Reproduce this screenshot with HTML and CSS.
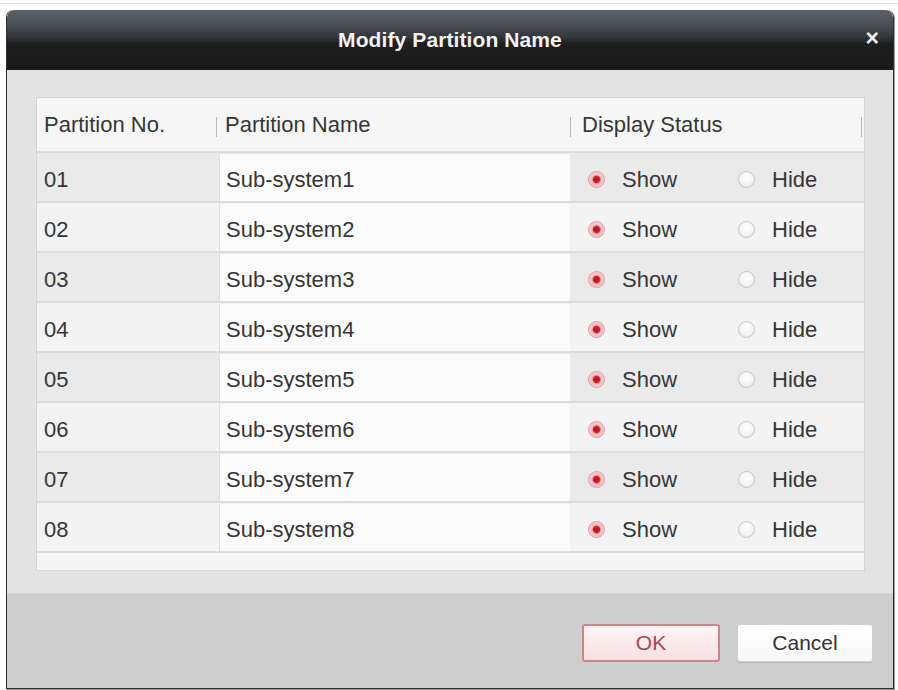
FILE: index.html
```html
<!DOCTYPE html>
<html>
<head>
<meta charset="utf-8">
<link rel="stylesheet" href="styles.css">
</head>
<body>
<div class="topline"></div>
<div class="dialog">
  <div class="titlebar">
    <span class="title">Modify Partition Name</span>
    <span class="close">×</span>
  </div>
  <div class="content">
    <div class="panel">
      <div class="thead">
        <div class="th c1">Partition No.</div>
        <div class="th c2"><span class="sep"></span>Partition Name</div>
        <div class="th c3"><span class="sep wide"></span>Display Status<span class="sep end"></span></div>
      </div>
      <div class="row odd"><div class="c1">01</div><div class="c2"><div class="inp">Sub-system1</div></div><div class="c3"><span class="radio on"></span><span class="lbl">Show</span><span class="radio"></span><span class="lbl">Hide</span></div></div>
      <div class="row"><div class="c1">02</div><div class="c2"><div class="inp">Sub-system2</div></div><div class="c3"><span class="radio on"></span><span class="lbl">Show</span><span class="radio"></span><span class="lbl">Hide</span></div></div>
      <div class="row odd"><div class="c1">03</div><div class="c2"><div class="inp">Sub-system3</div></div><div class="c3"><span class="radio on"></span><span class="lbl">Show</span><span class="radio"></span><span class="lbl">Hide</span></div></div>
      <div class="row"><div class="c1">04</div><div class="c2"><div class="inp">Sub-system4</div></div><div class="c3"><span class="radio on"></span><span class="lbl">Show</span><span class="radio"></span><span class="lbl">Hide</span></div></div>
      <div class="row odd"><div class="c1">05</div><div class="c2"><div class="inp">Sub-system5</div></div><div class="c3"><span class="radio on"></span><span class="lbl">Show</span><span class="radio"></span><span class="lbl">Hide</span></div></div>
      <div class="row"><div class="c1">06</div><div class="c2"><div class="inp">Sub-system6</div></div><div class="c3"><span class="radio on"></span><span class="lbl">Show</span><span class="radio"></span><span class="lbl">Hide</span></div></div>
      <div class="row odd"><div class="c1">07</div><div class="c2"><div class="inp">Sub-system7</div></div><div class="c3"><span class="radio on"></span><span class="lbl">Show</span><span class="radio"></span><span class="lbl">Hide</span></div></div>
      <div class="row"><div class="c1">08</div><div class="c2"><div class="inp">Sub-system8</div></div><div class="c3"><span class="radio on"></span><span class="lbl">Show</span><span class="radio"></span><span class="lbl">Hide</span></div></div>
    </div>
  </div>
  <div class="footer">
    <button class="btn ok">OK</button>
    <button class="btn cancel">Cancel</button>
  </div>
</div>
</body>
</html>
```
FILE: styles.css
```css
html, body {
  margin: 0;
  padding: 0;
  background: #ffffff;
}
body {
  font-family: "Liberation Sans", Arial, sans-serif;
  color: #363636;
  width: 898px;
  height: 690px;
  overflow: hidden;
}
.topline {
  height: 3px;
  border-bottom: 1px solid #e4e4e4;
  margin-bottom: 6px;
}
.dialog {
  margin-left: 6px;
  width: 886px;
  height: 678px;
  border: 1px solid #2e2e2e;
  border-top: none;
  border-radius: 7px 7px 0 0;
  display: flex;
  flex-direction: column;
  overflow: hidden;
  box-shadow: 1px 1px 0 #9a9a9a;
}
.titlebar {
  height: 60px;
  flex: none;
  display: flex;
  align-items: center;
  justify-content: center;
  position: relative;
  background: linear-gradient(to bottom, #5d626a 0%, #4a4e55 25%, #33363b 45%, #1e1e1f 56%, #1a1a1a 100%);
  border-radius: 7px 7px 0 0;
}
.title {
  color: #f2f2f2;
  font-weight: bold;
  font-size: 21px;
  letter-spacing: 0.1px;
}
.close {
  position: absolute;
  right: 14px;
  top: 16px;
  color: #f0f0f0;
  font-weight: bold;
  font-size: 23px;
  line-height: 24px;
}
.content {
  height: 523px;
  flex: none;
  background: #e3e3e3;
  padding: 27px 28px 0 29px;
  box-sizing: border-box;
}
.panel {
  height: 474px;
  background: #f5f5f5;
  border: 1px solid #d4d4d4;
  box-sizing: border-box;
}
.thead {
  height: 53px;
  display: flex;
  align-items: center;
  font-size: 22px;
  background: #f6f6f6;
  border-bottom: 2px solid #dadada;
}
.c1 {
  width: 179px;
  flex: none;
  padding-left: 7px;
  box-sizing: border-box;
}
.c2 {
  width: 354px;
  flex: none;
}
.c3 {
  flex: 1;
}
.th {
  display: flex;
  align-items: center;
}
.sep {
  width: 1px;
  height: 20px;
  background: #b9b9b9;
  margin-right: 8px;
  margin-top: 4px;
}
.sep.wide {
  margin-right: 11px;
}
.th.c3 .sep.end {
  margin-left: auto;
  margin-right: 2px;
}
.row {
  height: 50px;
  display: flex;
  align-items: stretch;
  font-size: 22px;
  background: #f3f3f3;
  border-bottom: 2px solid #dcdcdc;
  box-sizing: border-box;
}
.row.odd {
  background: #eaeaea;
}
.row .c1 {
  display: flex;
  align-items: center;
  padding-top: 5px;
}
.row .c2 {
  padding: 1px 0 0 3px;
  box-sizing: border-box;
  display: flex;
}
.inp {
  flex: 1;
  background: #fbfbfb;
  border-left: 1px solid #dedede;
  display: flex;
  align-items: center;
  padding-left: 6px;
  padding-top: 4px;
  box-sizing: border-box;
}
.row .c3 {
  display: flex;
  align-items: center;
  padding-left: 18px;
  padding-top: 5px;
}
.radio {
  width: 17px;
  height: 17px;
  border-radius: 50%;
  border: 1px solid #c6c6c6;
  background: radial-gradient(circle at 50% 40%, #ffffff 0%, #f4f4f4 55%, #dcdcdc 100%);
  box-sizing: border-box;
  flex: none;
}
.radio.on {
  border-color: #e09ca2;
  background: radial-gradient(circle at 50% 50%, #bd111b 0%, #d0222c 30%, #efbcc0 42%, #f8dcdd 100%);
}
.lbl {
  margin-left: 17px;
  width: 116px;
}
.footer {
  flex: 1;
  background: #cecece;
  display: flex;
  justify-content: flex-end;
  align-items: flex-start;
  padding: 30px 20px 0 0;
  gap: 17px;
  border-top: 1px solid #d6d6d6;
}
.btn {
  font-family: "Liberation Sans", Arial, sans-serif;
  font-size: 21px;
  height: 38px;
  border-radius: 3px;
  padding: 0;
  box-sizing: border-box;
}
.ok {
  width: 138px;
  color: #a8474e;
  border: 2px solid #c9868b;
  background: linear-gradient(to bottom, #fdf3f3 0%, #f8e1e2 100%);
}
.cancel {
  width: 136px;
  color: #333333;
  border: 1px solid #d2d2d2;
  background: linear-gradient(to bottom, #ffffff 0%, #f7f7f7 100%);
  box-shadow: 0 1px 1px #b5b5b5;
}
```
